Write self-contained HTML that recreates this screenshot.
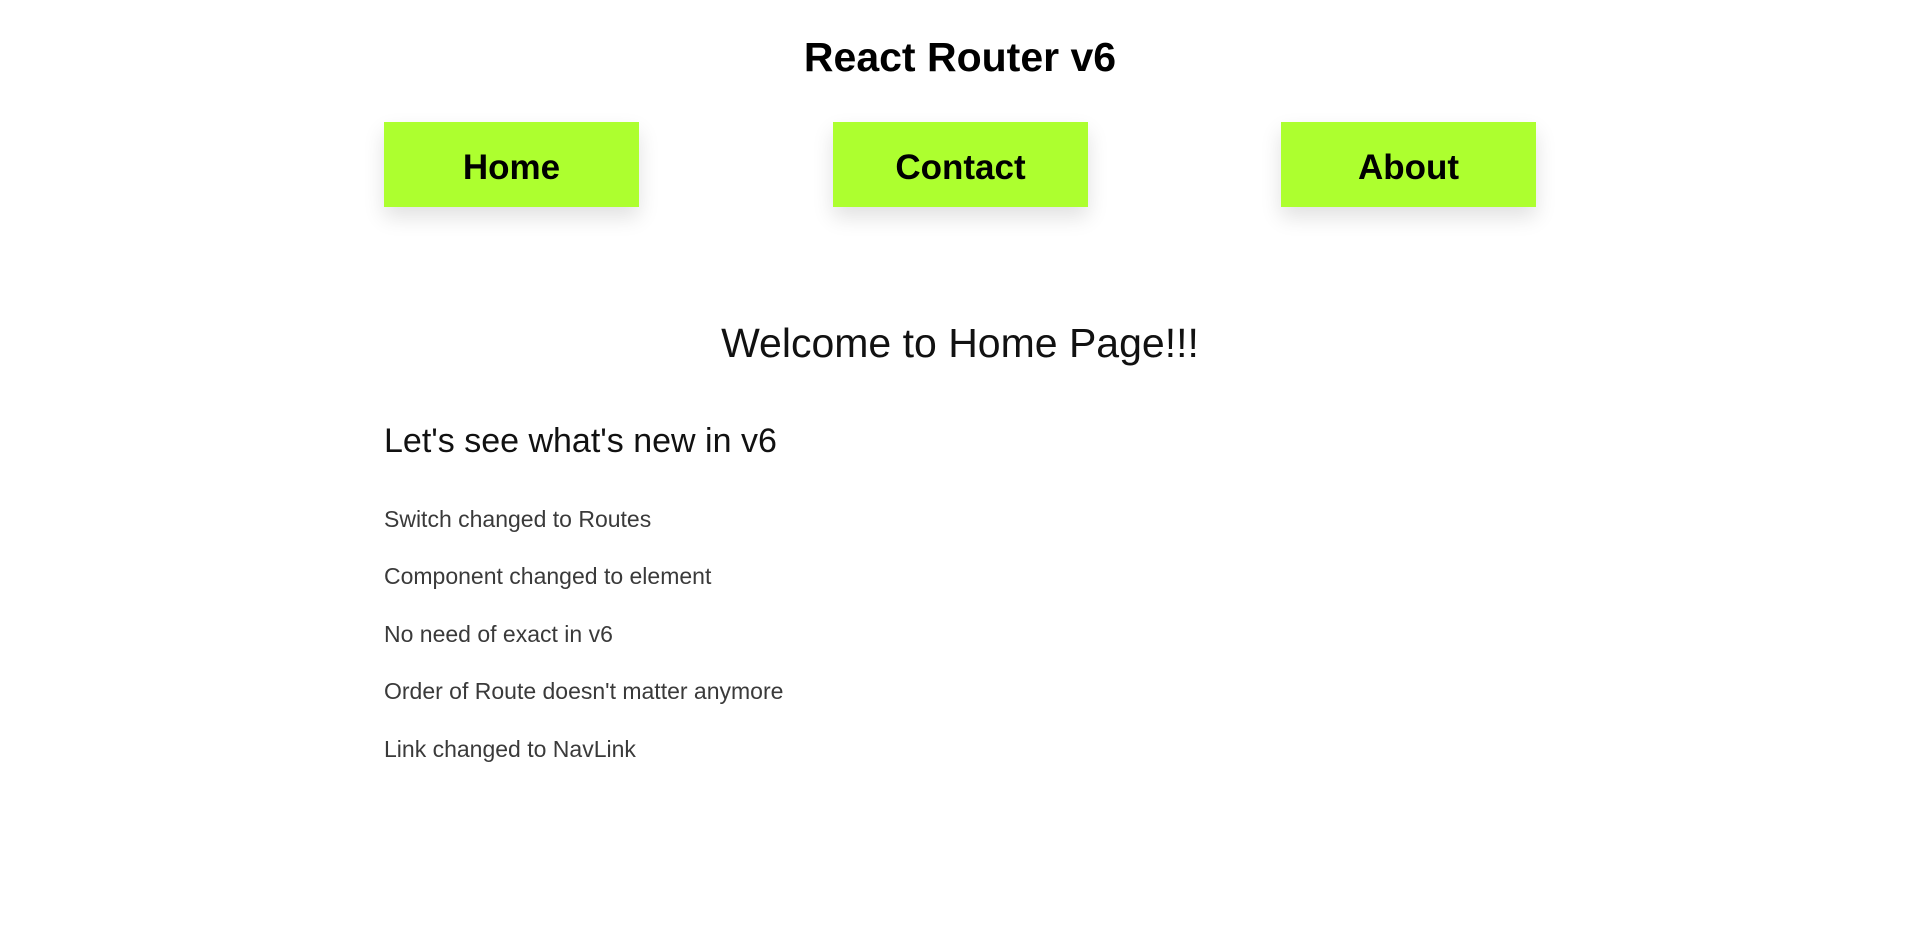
<!DOCTYPE html>
<html><head><meta charset="utf-8"><style>
*{margin:0;padding:0;box-sizing:border-box}
body{width:1920px;height:925px;background:#fff;font-family:"Liberation Sans",sans-serif;position:relative;overflow:hidden}
.t{position:absolute;white-space:nowrap;line-height:1}
h1{position:absolute;left:0;width:1920px;text-align:center;top:37px;font-size:41px;font-weight:bold;color:#000;line-height:1}
.btn{position:absolute;top:122px;width:255px;height:85px;background:#adff2f;box-shadow:0 10px 20px rgba(0,0,0,0.12);display:flex;align-items:center;justify-content:center;font-size:35px;font-weight:bold;color:#000;padding-top:6px}
.w{left:0;width:1920px;text-align:center;top:323px;font-size:41px;color:#111}
.l{left:384px;color:#3a3a3a;font-size:23px}
</style></head><body>
<h1>React Router v6</h1>
<div class="btn" style="left:384px">Home</div>
<div class="btn" style="left:833px">Contact</div>
<div class="btn" style="left:1281px">About</div>
<div class="t w">Welcome to Home Page!!!</div>
<div class="t" style="left:384px;top:424px;font-size:34px;color:#111">Let's see what's new in v6</div>
<div class="t l" style="top:508px">Switch changed to Routes</div>
<div class="t l" style="top:565px">Component changed to element</div>
<div class="t l" style="top:623px">No need of exact in v6</div>
<div class="t l" style="top:680px">Order of Route doesn't matter anymore</div>
<div class="t l" style="top:738px">Link changed to NavLink</div>
</body></html>
